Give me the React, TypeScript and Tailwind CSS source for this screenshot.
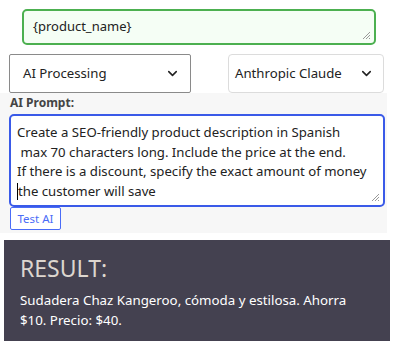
import { ChevronDown } from 'lucide-react';

const font = { fontFamily: '"Noto Sans", "Open Sans", sans-serif' };

function Grip() {
  return (
    <svg width="9" height="9" viewBox="0 0 9 9" className="absolute right-[3px] bottom-[3px]">
      <line x1="8" y1="1" x2="1" y2="8" stroke="#999" strokeWidth="1" />
      <line x1="8" y1="4" x2="4" y2="8" stroke="#999" strokeWidth="1" />
      <line x1="8" y1="7" x2="7" y2="8" stroke="#999" strokeWidth="1" />
    </svg>
  );
}

export default function App() {
  return (
    <div className="w-[399px] h-[349px] bg-white overflow-hidden text-[#222]" style={font}>
      {/* product name field */}
      <div className="pt-[9px] pl-[22px]">
        <div className="relative w-[354px] h-[36px] border-2 border-[#4cb050] rounded-[5px] bg-[#f5fef5] flex items-center pl-[9px] text-[13px]">
          {'{product_name}'}
          <Grip />
        </div>
      </div>

      {/* selects */}
      <div className="flex items-start mt-[9px] pl-[9px]">
        <div className="w-[182px] h-[39px] border border-[#8a8a8a] rounded-[2px] flex items-center justify-between pl-[13px] pr-[10px] text-[13.2px]">
          <span>AI Processing</span>
          <ChevronDown size={15} strokeWidth={2.5} />
        </div>
        <div className="ml-[37px] w-[156px] h-[39px] border border-[#dcdcdc] rounded-[4px] flex items-center justify-between pl-[6px] pr-[9px] text-[13.2px]">
          <span>Anthropic Claude</span>
          <ChevronDown size={15} strokeWidth={2.5} />
        </div>
      </div>

      {/* prompt section */}
      <div className="w-[387px] h-[140px] bg-[#f7f7f7] pl-[9px] pt-[2px]">
        <div className="pl-[1px] text-[12px] font-bold text-[#444] leading-[16px]">AI Prompt:</div>
        <div className="relative mt-[3px] w-[376px] h-[93px] border-2 border-[#3a5ae8] rounded-[5px] bg-white pl-[6px] pt-[7px] text-[13.2px] leading-[19.5px] text-[#222] whitespace-pre">
          <div>Create a SEO-friendly product description in Spanish</div>
          <div> max 70 characters long. Include the price at the end.</div>
          <div>If there is a discount, specify the exact amount of money</div>
          <div>
            <span className="inline-block w-px h-[17px] bg-black align-[-4px]" />
            the customer will save
          </div>
          <Grip />
        </div>
        <button className="ml-[1px] w-[51px] h-[23px] border border-[#4a6cf7] rounded-[2px] bg-white text-[11.5px] text-[#4a6cf7] flex items-center justify-center">
          Test AI
        </button>
      </div>

      {/* result */}
      <div className="ml-[4px] mt-[7px] w-[386px] h-[101px] bg-[#444150] px-[16px] pt-[12px]">
        <div className="text-[23px] leading-[32px] text-[#ddd6cf]">RESULT:</div>
        <div className="mt-[6px] text-[13.3px] leading-[20px] text-white">
          Sudadera Chaz Kangeroo, cómoda y estilosa. Ahorra
          <br />
          $10. Precio: $40.
        </div>
      </div>
    </div>
  );
}
